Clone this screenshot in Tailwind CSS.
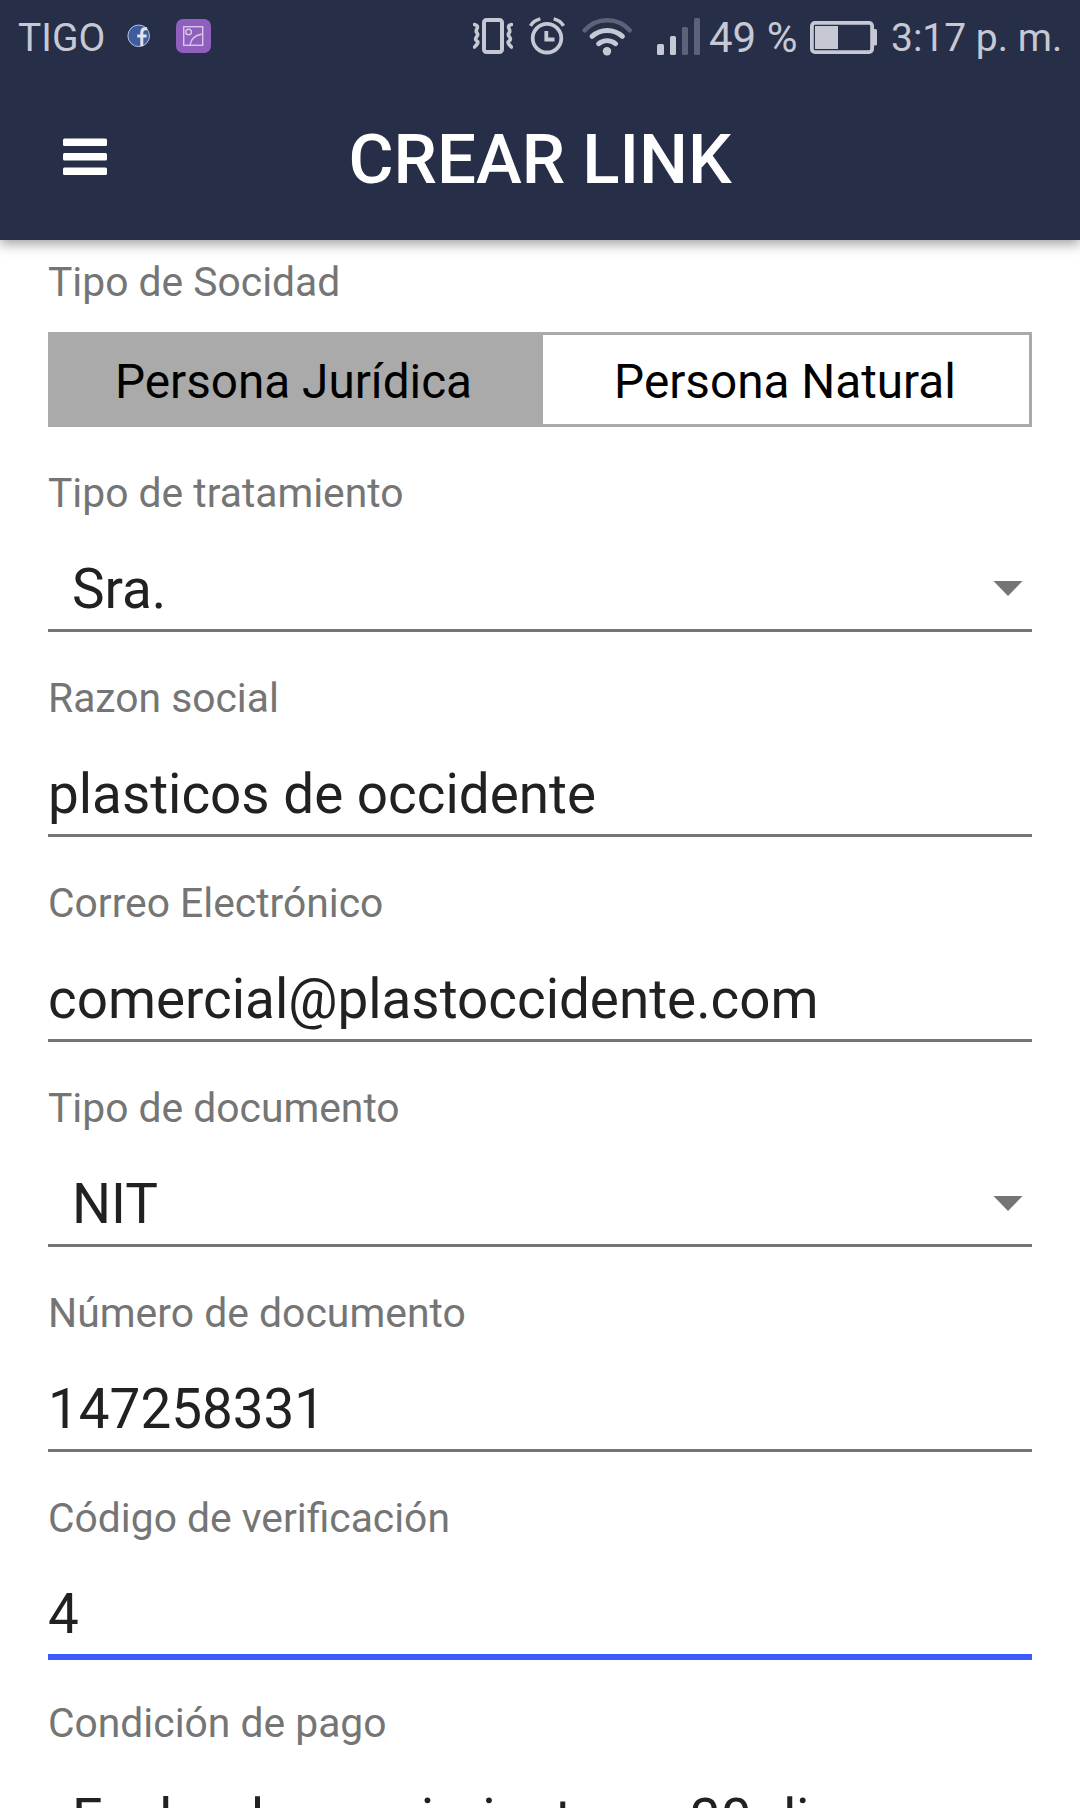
<!DOCTYPE html>
<html lang="es">
<head>
  <meta charset="UTF-8" />
  <meta name="viewport" content="width=device-width, initial-scale=1.0"/>
  <title>Crear Link</title>
  <script src="https://cdn.jsdelivr.net/npm/@tailwindcss/browser@4"></script>
</head>
<body class="bg-white font-['Roboto',sans-serif]">
<div class="w-[1080px] h-[1808px] overflow-hidden">

  <header class="h-60 bg-[#272e48] shadow-[0_4px_12px_rgba(0,0,0,0.38)]">
    <!-- Status bar -->
    <div class="h-[72px] pt-4 pl-[18px] pr-5 flex items-start text-[39px] leading-[45px] text-[#c6c8d4] whitespace-nowrap">
      <span class="w-[109px]">TIGO</span>
      <svg class="w-6 h-10" viewBox="0 0 24 40">
        <circle cx="11.7" cy="19.8" r="10.8" fill="#3e5c9e" stroke="#b9c4dc" stroke-width="1"/>
        <path d="M14.8 30V16.5q0-3.7 3.6-3.7h1.8M10.2 20h9.4" fill="none" stroke="#dfe4f0" stroke-width="3"/>
      </svg>
      <svg class="ml-[25px] w-9 h-10" viewBox="0 0 36 40">
        <rect x="0" y="3" width="35" height="34" rx="7" fill="#8e5fbd"/>
        <g fill="none" stroke="#d9c6e8" stroke-width="1.4">
          <rect x="7.7" y="10.7" width="19" height="18.6"/>
          <circle cx="12.6" cy="16" r="2.8"/>
          <path d="M14 29q1.500-9.500 12.500-11"/>
        </g>
      </svg>

      <div class="ml-auto flex items-start">
        <!-- vibrate -->
        <svg class="w-10 h-10" viewBox="0 0 40 40" fill="none" stroke="#c6c8d4" stroke-linecap="round" stroke-linejoin="round">
          <rect x="11" y="4" width="18" height="32" rx="2.500" stroke-width="4"/>
          <path d="M1.500 8.500q4 1 2.500 4t0 4.500-.5 4 .5 4-2.500 6M38.500 8.500q-4 1-2.500 4t0 4.500 .5 4-.5 4 2.500 6" stroke-width="3.600"/>
        </svg>
        <!-- alarm -->
        <svg class="ml-4 w-[37px] h-10" viewBox="0 0 37 40" fill="none" stroke="#c6c8d4">
          <circle cx="18" cy="22.200" r="14.300" stroke-width="3.800"/>
          <path d="M17.300 15v8.500h8.200" stroke-width="3.800"/>
          <path d="M1.500 9.800Q4.500 4.500 11.300 2.900M34.500 9.800Q31.500 4.500 24.700 2.900" stroke-width="3.500"/>
        </svg>
        <!-- wifi -->
        <svg class="ml-4 w-[51px] h-10" viewBox="0 0 51 40" fill="none" stroke="#c6c8d4" stroke-linecap="round">
          <path d="M2.700 14.300A30 30 0 0 1 47.700 14.300" stroke="#5c6279" stroke-width="4.500"/>
          <path d="M10 20.300A22.500 22.500 0 0 1 40.400 20.300" stroke-width="5"/>
          <path d="M16.500 27.800A13.500 13.500 0 0 1 33.700 27.800" stroke-width="4.800"/>
          <circle cx="25" cy="35.200" r="4.200" fill="#c6c8d4" stroke="none"/>
        </svg>
        <!-- signal -->
        <svg class="ml-[23px] w-[45px] h-10" viewBox="0 0 45 40" fill="#c6c8d4">
          <rect x="1" y="28" width="7" height="11" rx="1.500"/>
          <rect x="14" y="20" width="6" height="19" rx="1.500"/>
          <rect x="26" y="11" width="6" height="28" rx="1.500" fill="#5c6279"/>
          <rect x="38" y="2" width="6" height="37" rx="1.500" fill="#5c6279"/>
        </svg>
        <span class="ml-2 w-[101px] text-[42px] leading-[43px]">49 %</span>
        <!-- battery -->
        <svg class="w-[68px] h-10" viewBox="0 0 68 40">
          <rect x="1.900" y="6.900" width="60.200" height="29.200" rx="3" fill="none" stroke="#c6c8d4" stroke-width="3.800"/>
          <rect x="5" y="10" width="23" height="23" fill="#c6c8d4"/>
          <rect x="62" y="13" width="5" height="16.500" rx="1.500" fill="#c6c8d4"/>
        </svg>
        <span class="ml-[13px] w-[169px]">3:17 p. m.</span>
      </div>
    </div>

    <!-- Toolbar -->
    <div class="h-[168px] px-[63px] flex items-center">
      <svg class="mt-[2px] w-11 h-[38px]" viewBox="0 0 44 38" fill="#fff">
        <rect y="0.500" width="44" height="7.500" rx="1.500"/>
        <rect y="15" width="44" height="7.500" rx="1.500"/>
        <rect y="29.500" width="44" height="7.500" rx="1.500"/>
      </svg>
      <h1 class="flex-1 mt-[8px] text-center text-[69px] leading-[80px] font-medium text-white">CREAR LINK</h1>
      <div class="w-11"></div>
    </div>
  </header>

  <!-- Form -->
  <form class="px-12 pt-[18px] text-[54.8px] leading-[64px] text-[#212121] whitespace-nowrap">
    <label class="block text-[40.8px] leading-[48px] text-[#757575]">Tipo de Socidad</label>
    <div class="mt-[26px] h-[95px] flex border-3 border-[#aaaaaa] text-[47.7px] leading-[94px] text-black text-center">
      <div class="w-[492px] h-[89px] pr-[7px] bg-[#aaaaaa]">Persona Jurídica</div>
      <div class="flex-1 h-[89px] pr-[2px]">Persona Natural</div>
    </div>

    <div class="h-[205px] pt-[42px] border-b-3 border-[#757575]">
      <label class="block text-[40.8px] leading-[48px] text-[#757575]">Tipo de tratamiento</label>
      <div class="mt-10 pl-6 pr-[9px] flex items-center justify-between">
        <span>Sra.</span>
        <svg class="mt-[2px] w-[30px] h-[18px]" viewBox="0 0 30 18"><path d="M0.500 0h29L15 15z" fill="#757575"/></svg>
      </div>
    </div>

    <div class="h-[205px] pt-[42px] border-b-3 border-[#757575]">
      <label class="block text-[40.8px] leading-[48px] text-[#757575]">Razon social</label>
      <div class="mt-10">plasticos de occidente</div>
    </div>

    <div class="h-[205px] pt-[42px] border-b-3 border-[#757575]">
      <label class="block text-[40.8px] leading-[48px] text-[#757575]">Correo Electrónico</label>
      <div class="mt-10">comercial@plastoccidente.com</div>
    </div>

    <div class="h-[205px] pt-[42px] border-b-3 border-[#757575]">
      <label class="block text-[40.8px] leading-[48px] text-[#757575]">Tipo de documento</label>
      <div class="mt-10 pl-6 pr-[9px] flex items-center justify-between">
        <span>NIT</span>
        <svg class="mt-[2px] w-[30px] h-[18px]" viewBox="0 0 30 18"><path d="M0.500 0h29L15 15z" fill="#757575"/></svg>
      </div>
    </div>

    <div class="h-[205px] pt-[42px] border-b-3 border-[#757575]">
      <label class="block text-[40.9px] leading-[48px] text-[#757575]">Número de documento</label>
      <div class="mt-10">147258331</div>
    </div>

    <!-- focused field, thicker underline -->
    <div class="h-[208px] -mb-[3px] pt-[42px] border-b-6 border-[#3d5afe]">
      <label class="block text-[40.8px] leading-[48px] text-[#757575]">Código de verificación</label>
      <div class="mt-10">4</div>
    </div>

    <div class="h-[205px] pt-[42px]">
      <label class="block text-[40.8px] leading-[48px] text-[#757575]">Condición de pago</label>
      <div class="mt-10 pl-6">Fecha de vencimiento en 30 dias</div>
    </div>
  </form>

</div>
</body>
</html>
